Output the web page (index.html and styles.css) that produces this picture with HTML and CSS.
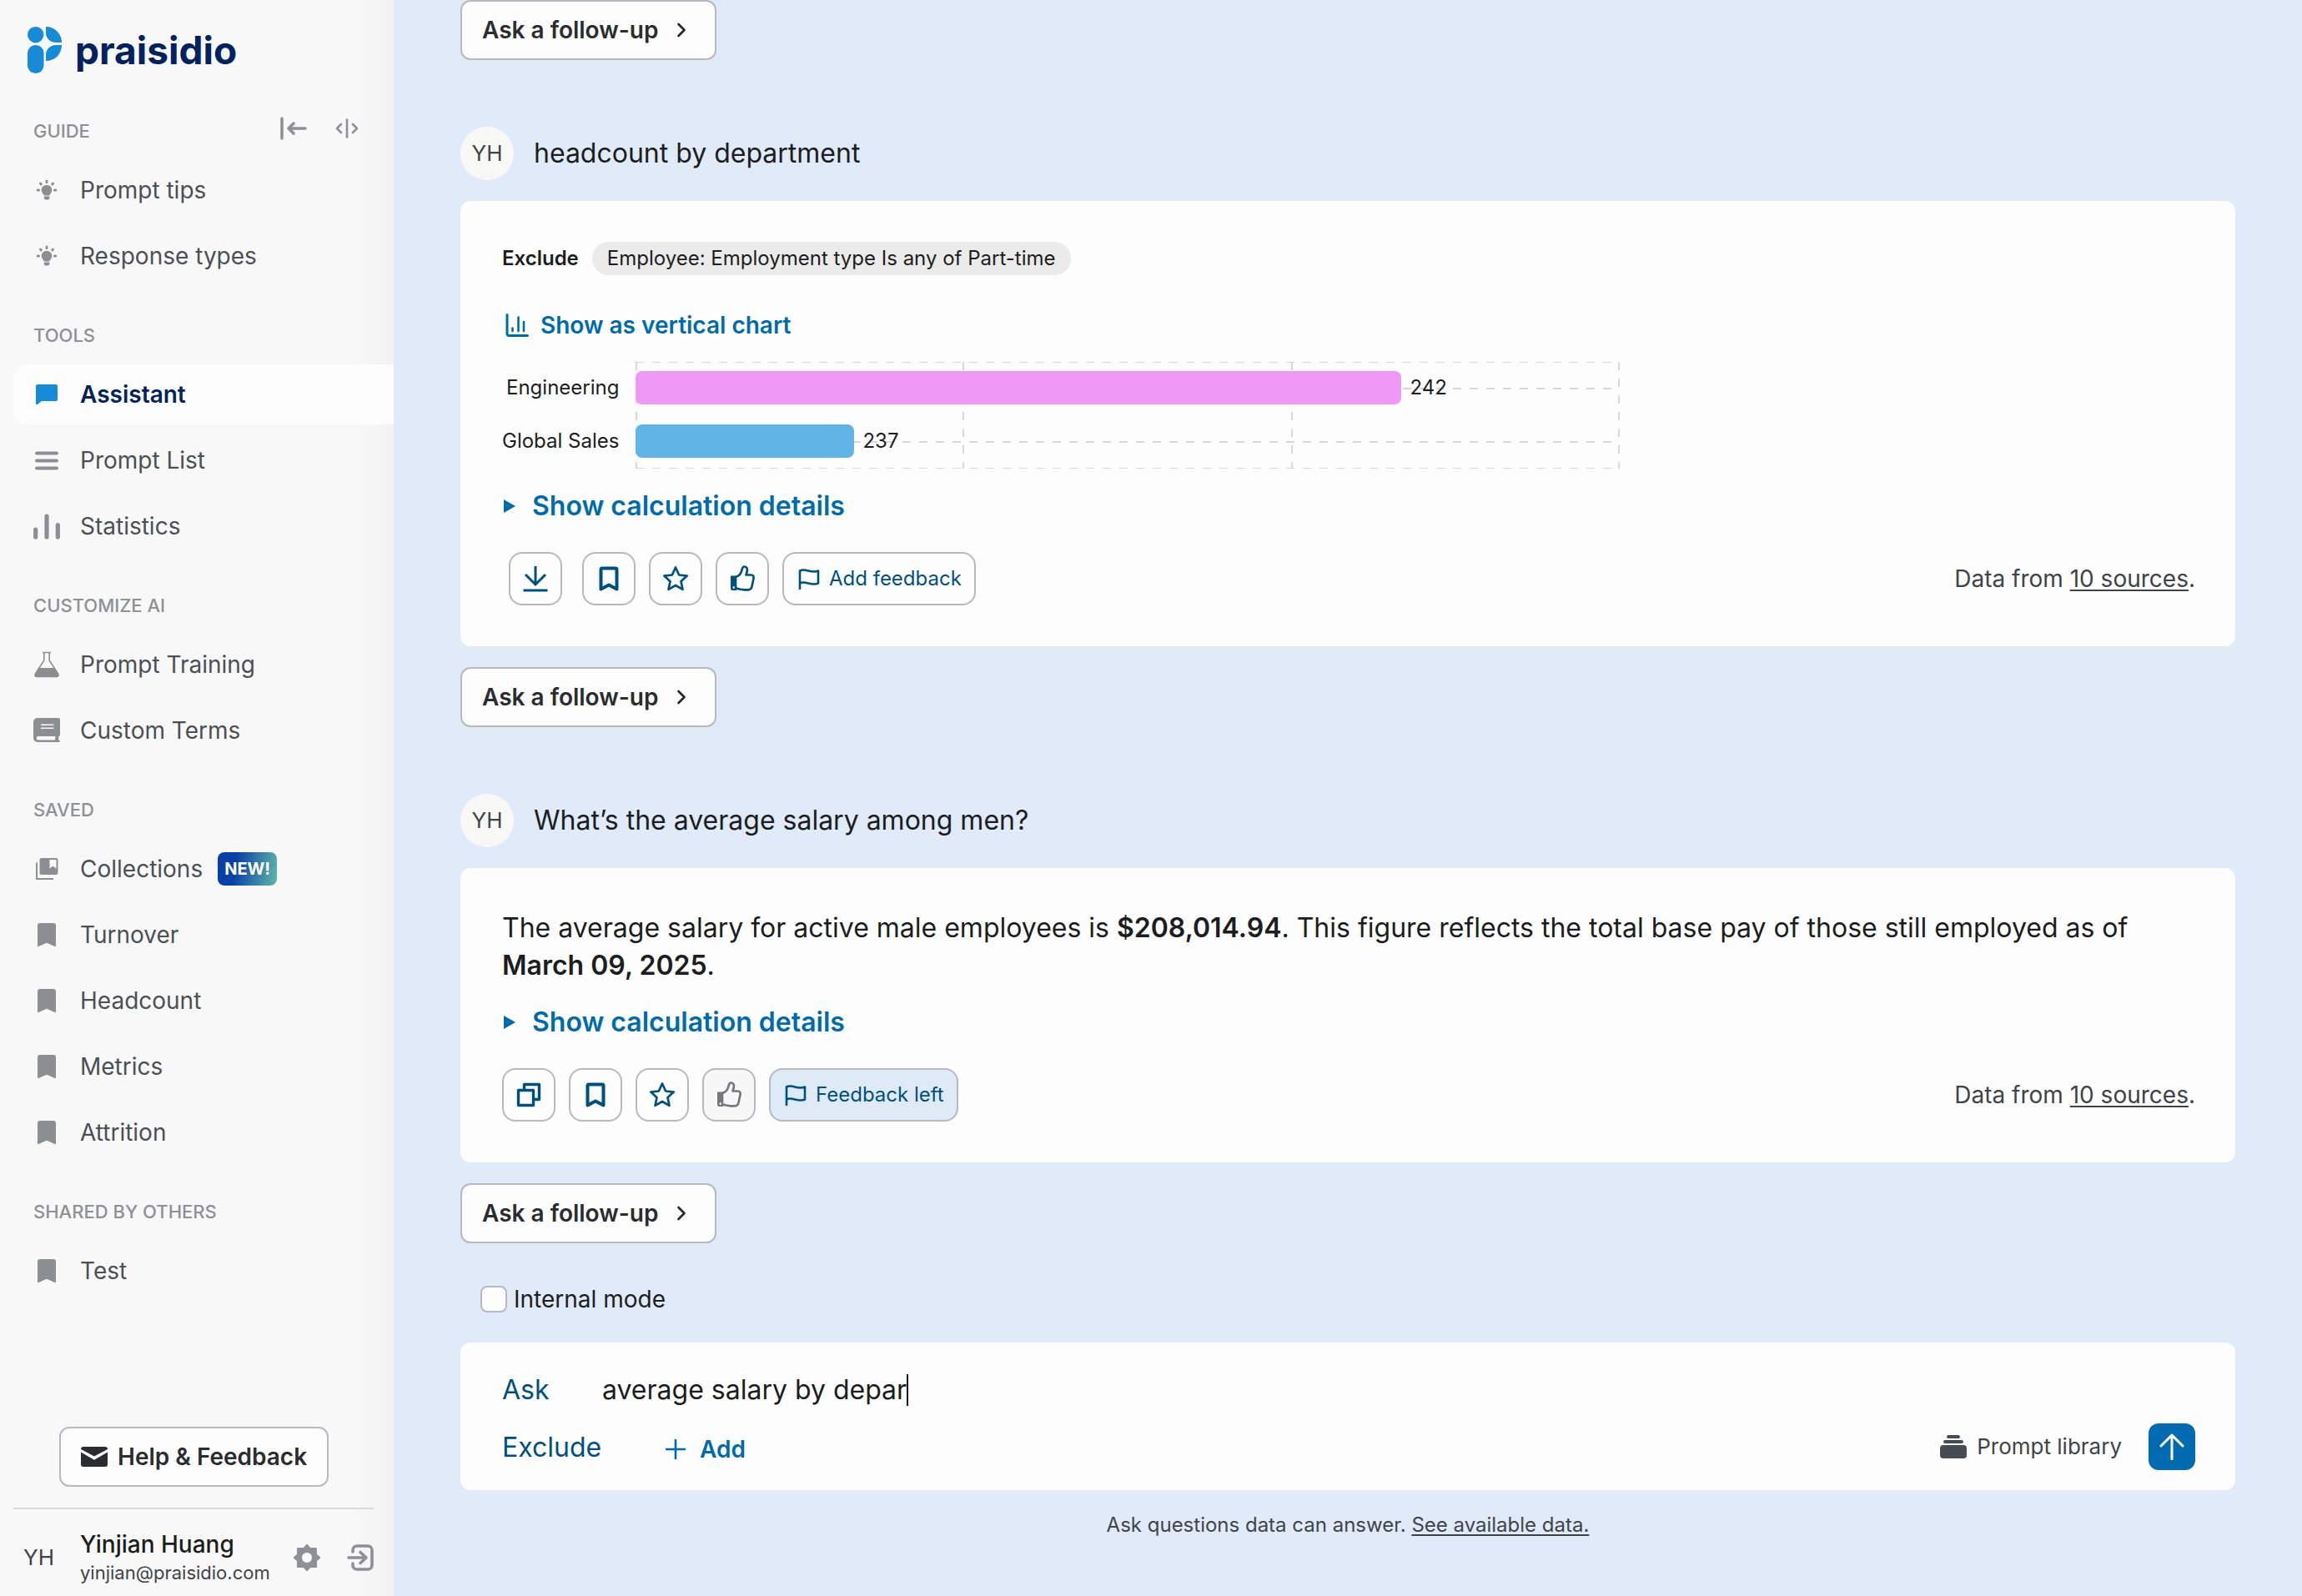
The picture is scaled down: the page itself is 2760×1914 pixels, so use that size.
FILE: index.html
```html
<!DOCTYPE html>
<html lang="en">
<head>
<meta charset="utf-8">
<meta name="viewport" content="width=device-width, initial-scale=1">
<title>Praisidio Assistant</title>
<link rel="stylesheet" href="styles.css">
</head>
<body>
<svg class="sprite" aria-hidden="true">
  <symbol id="i-bulb" viewBox="0 0 32 32"><circle cx="16" cy="16" r="6.3"/><path d="M12.5 19h7v3.5h-7zM12.8 23.6h6.6v1.8a2 2 0 0 1-2 2h-2.600a2 2 0 0 1-2-2z"/><g fill="none" stroke="currentColor" stroke-width="3" stroke-linecap="round"><path d="M16 5v1.500M8.500 8l.8.900M23.500 8l-.8.900M5.200 16h1.300M25.500 16h1.300"/></g></symbol>
  <symbol id="i-chat" viewBox="0 0 32 32"><path d="M5 4h22a2 2 0 0 1 2 2v16a2 2 0 0 1-2 2H10l-5 4H3V6a2 2 0 0 1 2-2z"/></symbol>
  <symbol id="i-list" viewBox="0 0 32 32"><path d="M4 7.500h24M4 16.500h24M4 25.500h24" fill="none" stroke="currentColor" stroke-width="4" stroke-linecap="round"/></symbol>
  <symbol id="i-bars" viewBox="0 0 32 32"><path d="M2.700 20v9M16 4v25M29.300 14.500v14.500" fill="none" stroke="currentColor" stroke-width="5.200" stroke-linecap="round"/></symbol>
  <symbol id="i-flask" viewBox="0 0 32 32"><path d="M11 1.500h10M12.800 2v9L2.500 27c-1 2 0 3.500 2 3.500h23c2 0 3-1.500 2-3.500L19.200 11V2" fill="none" stroke="currentColor" stroke-width="1.600"/><path d="M6.500 20h19l5 8c.5 2-1 3-3 3h-23c-2 0-3.500-1-3-3z"/></symbol>
  <symbol id="i-book" viewBox="0 0 32 32"><path fill-rule="evenodd" d="M5 1h25a2 2 0 0 1 2 2v18a2 2 0 0 1-1.500 2l-.5 4.500h1.500V30H5a5 5 0 0 1-5-5V6a5 5 0 0 1 5-5zM9 8.500v1.600h15.500V8.500zM9 12.500v1.600h15.500v-1.600zM6 23a2.200 2.200 0 0 0 0 4.500h20l.5-4.500z"/></symbol>
  <symbol id="i-collections" viewBox="0 0 32 32"><path d="M4 8.500v19.500h20" fill="none" stroke="currentColor" stroke-width="2"/><path fill-rule="evenodd" d="M10 3h17a2.500 2.500 0 0 1 2.500 2.500v15a2.500 2.500 0 0 1-2.500 2.500H10a2.500 2.500 0 0 1-2.500-2.500v-15A2.500 2.500 0 0 1 10 3zM19.500 5v10.500l4-2.800 4 2.800V5z"/></symbol>
  <symbol id="i-mark" viewBox="0 0 32 32"><path d="M8 2h16a3 3 0 0 1 3 3v24.500a.8.8 0 0 1-1.200.6L16 25.800 6.200 30.100a.8.8 0 0 1-1.200-.6V5a3 3 0 0 1 3-3z"/></symbol>
  <symbol id="i-mail" viewBox="0 0 32 24"><path d="M3 0h26a3 3 0 0 1 3 3L16 11.500 0 3a3 3 0 0 1 3-3z"/><path d="M0 6.500l16 9.200 16-9.200V21a3 3 0 0 1-3 3H3a3 3 0 0 1-3-3z"/></symbol>
  <symbol id="i-collapse" viewBox="0 0 32 28"><g fill="none" stroke="currentColor" stroke-linecap="round" stroke-linejoin="round"><path d="M2 2v24" stroke-width="3.500"/><path d="M30 14H10M16 8l-6 6 6 6" stroke-width="3.500"/></g></symbol>
  <symbol id="i-resize" viewBox="0 0 28 24"><g fill="none" stroke="currentColor" stroke-width="2.600" stroke-linecap="round" stroke-linejoin="round"><path d="M14 1.500v21M7 7l-5 5 5 5M21 7l5 5-5 5"/></g></symbol>
  <symbol id="i-gear" viewBox="0 0 32 32"><path fill-rule="evenodd" d="M16 0l4 4.500L27.300 4.700 27.500 12 32 16l-4.500 4 .2 7.500-7.700.1L16 32l-4-4.400-7.600-.2.100-7.400L0 16l4.500-4-.1-7.300 7.600-.2zM16 9.500a6.500 6.500 0 1 0 0 13 6.500 6.500 0 0 0 0-13z" stroke="currentColor" stroke-linejoin="round"/></symbol>
  <symbol id="i-logout" viewBox="0 0 32 32"><g fill="none" stroke="currentColor" stroke-width="3.600" stroke-linecap="round" stroke-linejoin="round"><path d="M7 9V7a5 5 0 0 1 5-5h13a5 5 0 0 1 5 5v18a5 5 0 0 1-5 5H12a5 5 0 0 1-5-5v-2"/><path d="M2 16h20M16 9.500l7 6.500-7 6.500"/></g></symbol>
  <symbol id="i-chevron" viewBox="0 0 12 20"><path d="M2.500 3l7 7-7 7" fill="none" stroke="currentColor" stroke-width="2.800" stroke-linecap="round" stroke-linejoin="round"/></symbol>
  <symbol id="i-chart" viewBox="0 0 28 28"><g fill="none" stroke="currentColor" stroke-width="3" stroke-linecap="round"><path d="M2 1.500V24a2.500 2.500 0 0 0 2.500 2.500H26.500"/><path d="M8.500 17.500v3.500M15.500 4.500v16.500M22 10v11" stroke-width="2.600"/></g></symbol>
  <symbol id="i-download" viewBox="0 0 32 32"><path d="M16 1v22M4 11l12 12 12-12M1.500 30h29" fill="none" stroke="currentColor" stroke-width="3"/></symbol>
  <symbol id="i-bookmark" viewBox="0 0 32 32"><path d="M8 3.500h16a1.500 1.500 0 0 1 1.500 1.500v23.500L16 23.500l-9.500 5V5A1.500 1.500 0 0 1 8 3.500z" fill="none" stroke="currentColor" stroke-width="4" stroke-linejoin="round"/></symbol>
  <symbol id="i-star" viewBox="0 0 32 32"><path d="M16 2.500l4.100 9 9.600 1.100-7.200 6.600 2 9.700L16 24l-8.500 4.900 2-9.700-7.200-6.600 9.600-1.100z" fill="none" stroke="currentColor" stroke-width="2.700" stroke-linejoin="round"/></symbol>
  <symbol id="i-thumb" viewBox="0 0 32 32"><path fill-rule="evenodd" d="M2 12.500h7V30H4.500A2.500 2.500 0 0 1 2 27.500zM6 25a1.500 1.500 0 1 0 0 3 1.500 1.500 0 0 0 0-3z"/><path d="M8 14c4-1 6.500-4 7.500-8.500.5-2.500 1.500-4 3-4 3 0 4 3 3.200 6L20.500 11.500h6c2.500 0 3.500 2 3 4.300l-2 9.500c-.6 3-2 4-4.500 4H18c-4 0-6-1.300-10-1.600z" fill="none" stroke="currentColor" stroke-width="2.700" stroke-linejoin="round"/></symbol>
  <symbol id="i-flag" viewBox="0 0 26 26"><path d="M2 25V3.500c7-4 13 4 22 0v15c-9 4-15-4-22 0" fill="none" stroke="currentColor" stroke-width="2.600" stroke-linejoin="round" stroke-linecap="round"/></symbol>
  <symbol id="i-copy" viewBox="0 0 32 32"><path d="M10.500 10V3.500h18v18H22M3.500 10.500h18v18h-18z" fill="none" stroke="currentColor" stroke-width="3.400" stroke-linejoin="round"/></symbol>
  <symbol id="i-plus" viewBox="0 0 26 26"><path d="M13 1v24M1 13h24" fill="none" stroke="currentColor" stroke-width="2.600"/></symbol>
  <symbol id="i-stack" viewBox="0 0 32 28"><rect y="12" width="32" height="16" rx="4"/><rect x="4" y="6" width="24" height="4" rx="2"/><rect x="8" width="16" height="4" rx="2"/></symbol>
  <symbol id="i-up" viewBox="0 0 32 32"><path d="M16 31V2M3 15L16 2l13 13" fill="none" stroke="currentColor" stroke-width="3" stroke-linecap="round" stroke-linejoin="round"/></symbol>
</svg>

<div class="app">
  <aside class="sidebar">
    <a class="logo" href="#">
      <svg class="logo-mark" viewBox="0 0 41 56" aria-hidden="true"><circle cx="9.700" cy="9.700" r="9.700"/><rect y="22" width="19.500" height="34" rx="9.700"/><path d="M22 0C32 0 41 8 41 19H34C27 19 22 14 22 7z"/><path d="M41 22C41 33 33 41 22 41V34C22 27 27 22 34 22z"/></svg>
      <span class="logo-name">praisidio</span>
    </a>
    <nav class="nav">
      <div class="nav-head first">
        <h2 class="nav-title">Guide</h2>
        <button class="plain" aria-label="Collapse sidebar"><svg class="ic-collapse"><use href="#i-collapse"/></svg></button>
        <button class="plain" aria-label="Resize sidebar"><svg class="ic-resize"><use href="#i-resize"/></svg></button>
      </div>
      <a class="nav-item" href="#"><svg class="ic"><use href="#i-bulb"/></svg>Prompt tips</a>
      <a class="nav-item" href="#"><svg class="ic"><use href="#i-bulb"/></svg>Response types</a>
      <div class="nav-head"><h2 class="nav-title">Tools</h2></div>
      <a class="nav-item active" href="#"><svg class="ic"><use href="#i-chat"/></svg>Assistant</a>
      <a class="nav-item" href="#"><svg class="ic"><use href="#i-list"/></svg>Prompt List</a>
      <a class="nav-item" href="#"><svg class="ic"><use href="#i-bars"/></svg>Statistics</a>
      <div class="nav-head"><h2 class="nav-title">Customize AI</h2></div>
      <a class="nav-item" href="#"><svg class="ic"><use href="#i-flask"/></svg>Prompt Training</a>
      <a class="nav-item" href="#"><svg class="ic"><use href="#i-book"/></svg>Custom Terms</a>
      <div class="nav-head"><h2 class="nav-title">Saved</h2></div>
      <a class="nav-item" href="#"><svg class="ic"><use href="#i-collections"/></svg>Collections <span class="badge">NEW!</span></a>
      <a class="nav-item" href="#"><svg class="ic"><use href="#i-mark"/></svg>Turnover</a>
      <a class="nav-item" href="#"><svg class="ic"><use href="#i-mark"/></svg>Headcount</a>
      <a class="nav-item" href="#"><svg class="ic"><use href="#i-mark"/></svg>Metrics</a>
      <a class="nav-item" href="#"><svg class="ic"><use href="#i-mark"/></svg>Attrition</a>
      <div class="nav-head"><h2 class="nav-title">Shared by others</h2></div>
      <a class="nav-item" href="#"><svg class="ic"><use href="#i-mark"/></svg>Test</a>
    </nav>
    <button class="btn help"><svg class="ic-mail"><use href="#i-mail"/></svg>Help &amp; Feedback</button>
    <div class="user">
      <span class="user-initials">YH</span>
      <div class="user-text">
        <span class="user-name">Yinjian Huang</span>
        <span class="user-mail">yinjian@praisidio.com</span>
      </div>
      <button class="plain" aria-label="Settings"><svg class="ic"><use href="#i-gear"/></svg></button>
      <button class="plain" aria-label="Log out"><svg class="ic"><use href="#i-logout"/></svg></button>
    </div>
  </aside>

  <main class="main">
    <button class="btn follow">Ask a follow-up<svg class="ic-chevron"><use href="#i-chevron"/></svg></button>

    <section class="exchange">
      <div class="question"><span class="avatar">YH</span><h3 class="question-text">headcount by department</h3></div>
      <article class="card">
        <div class="filters"><strong class="filters-label">Exclude</strong><span class="chip">Employee: Employment type Is any of Part-time</span></div>
        <button class="link-btn chart-toggle"><svg class="ic-chart"><use href="#i-chart"/></svg>Show as vertical chart</button>
        <div class="chart">
          <div class="chart-labels"><span>Engineering</span><span>Global Sales</span></div>
          <div class="plot">
            <svg class="grid-lines" viewBox="0 0 1180 130" preserveAspectRatio="none" aria-hidden="true">
              <g fill="none" stroke="#d8d8da" stroke-width="2" stroke-dasharray="10 10">
                <path stroke-width="1" d="M0 1.500h1180M0 128.500h1180"/>
                <path d="M0 33h1180M0 97h1180"/>
                <path d="M1 1v128M393 1v128M787 1v128M1179 1v128"/>
              </g>
            </svg>
            <div class="bar-row"><span class="bar pink" style="width: 918px"></span>242</div>
            <div class="bar-row"><span class="bar blue" style="width: 262px"></span>237</div>
          </div>
        </div>
        <details class="calc"><summary>Show calculation details</summary></details>
        <div class="actions">
          <button class="icon-btn spaced" aria-label="Download"><svg class="ic"><use href="#i-download"/></svg></button>
          <button class="icon-btn" aria-label="Save"><svg class="ic"><use href="#i-bookmark"/></svg></button>
          <button class="icon-btn" aria-label="Favorite"><svg class="ic"><use href="#i-star"/></svg></button>
          <button class="icon-btn" aria-label="Like"><svg class="ic"><use href="#i-thumb"/></svg></button>
          <button class="icon-btn wide"><svg class="ic-flag"><use href="#i-flag"/></svg>Add feedback</button>
          <span class="sources">Data from <a href="#">10 sources</a>.</span>
        </div>
      </article>
      <button class="btn follow">Ask a follow-up<svg class="ic-chevron"><use href="#i-chevron"/></svg></button>
    </section>

    <section class="exchange">
      <div class="question"><span class="avatar">YH</span><h3 class="question-text">What’s the average salary among men?</h3></div>
      <article class="card">
        <p class="answer">The average salary for active male employees is <strong>$208,014.94</strong>. This figure reflects the total base pay of those still employed as of <strong>March 09, 2025</strong>.</p>
        <details class="calc"><summary>Show calculation details</summary></details>
        <div class="actions">
          <button class="icon-btn" aria-label="Copy"><svg class="ic"><use href="#i-copy"/></svg></button>
          <button class="icon-btn" aria-label="Save"><svg class="ic"><use href="#i-bookmark"/></svg></button>
          <button class="icon-btn" aria-label="Favorite"><svg class="ic"><use href="#i-star"/></svg></button>
          <button class="icon-btn muted" aria-label="Liked"><svg class="ic"><use href="#i-thumb"/></svg></button>
          <button class="icon-btn wide left"><svg class="ic-flag"><use href="#i-flag"/></svg>Feedback left</button>
          <span class="sources">Data from <a href="#">10 sources</a>.</span>
        </div>
      </article>
      <button class="btn follow">Ask a follow-up<svg class="ic-chevron"><use href="#i-chevron"/></svg></button>
    </section>

    <label class="mode"><input type="checkbox">Internal mode</label>

    <form class="composer">
      <div class="composer-row">
        <label class="composer-label" for="ask">Ask</label>
        <div class="ask-field"><input id="ask" type="text" value="average salary by depar" autocomplete="off"><span class="caret"></span></div>
      </div>
      <div class="composer-row">
        <span class="composer-label wide">Exclude</span>
        <button type="button" class="link-btn add"><svg class="ic-plus"><use href="#i-plus"/></svg>Add</button>
        <button type="button" class="plain library"><svg class="ic-stack"><use href="#i-stack"/></svg>Prompt library</button>
        <button type="button" class="send" aria-label="Send"><svg class="ic"><use href="#i-up"/></svg></button>
      </div>
    </form>
    <p class="hint">Ask questions data can answer. <a href="#">See available data.</a></p>
  </main>
</div>
</body>
</html>
```
FILE: styles.css
```css
* { box-sizing: border-box; }

body {
  margin: 0;
  font-family: Inter, "Liberation Sans", sans-serif;
  font-size: 28px;
  line-height: 36px;
  color: #1c1d20;
  background: #e0eaf9;
}

button, input { font: inherit; color: inherit; }
button { cursor: pointer; }
h2, h3, p { margin: 0; font-weight: 400; }
a { color: inherit; }
svg { display: block; flex: none; fill: currentColor; }

.sprite { position: absolute; width: 0; height: 0; }
.ic { width: 32px; height: 32px; }

.app { display: flex; min-height: 100vh; }

/* Sidebar */
.sidebar {
  flex: none;
  display: flex;
  flex-direction: column;
  width: 472px;
  background: linear-gradient(90deg, #f8f8f8 90%, #f2f2f3);
}

.logo {
  display: flex;
  align-items: center;
  gap: 16px;
  height: 56px;
  margin: 32px 33px 0;
  text-decoration: none;
}
.logo-mark { width: 41px; height: 56px; fill: #178bd8; }
.logo-name { font-size: 46px; line-height: 56px; font-weight: 700; color: #00225e; }

.nav { padding-left: 16px; }
.nav-head {
  display: flex;
  align-items: center;
  height: 28px;
  margin: 45px 42px 21px 24px;
}
.nav-head.first { gap: 34px; margin-top: 55px; }
.nav-title {
  flex: 1;
  font-size: 22px;
  line-height: 28px;
  font-weight: 500;
  text-transform: uppercase;
  color: #8d9096;
}
.plain {
  display: flex;
  align-items: center;
  padding: 0;
  border: 0;
  background: none;
  color: #8d9096;
}
.nav-head .plain { padding-bottom: 6px; }
.ic-collapse { width: 32px; height: 28px; }
.ic-resize { width: 28px; height: 24px; }

.nav-item {
  display: flex;
  align-items: center;
  gap: 24px;
  height: 72px;
  padding-left: 24px;
  border-radius: 16px 0 0 16px;
  color: #4a5056;
  text-decoration: none;
}
.nav-item + .nav-item { margin-top: 7px; }
.nav-item svg { color: #8b8f94; }
.nav-item.active { background: #fdfdfd; color: #00225e; font-weight: 600; }
.nav-item.active svg { color: #178bd8; }
.badge {
  height: 40px;
  margin-left: -6px;
  padding: 0 8px;
  border-radius: 8px;
  font-size: 20px;
  line-height: 40px;
  font-weight: 700;
  color: #fff;
  background: linear-gradient(100deg, #0a3fa8 30%, #5fb8a8);
}

.btn {
  display: flex;
  align-items: center;
  height: 72px;
  padding: 0 24px;
  border: 2px solid #b6b8c2;
  border-radius: 12px;
  background: #fdfdfd;
  color: #2a2c30;
  font-weight: 600;
}
.help { gap: 12px; margin: auto auto 25px 71px; }
.ic-mail { width: 32px; height: 24px; }

.user {
  display: flex;
  align-items: center;
  gap: 32px;
  height: 106px;
  margin: 0 24px 0 16px;
  padding-top: 12px;
  border-top: 2px solid #dadade;
}
.user-initials { flex: none; width: 48px; padding-left: 12px; font-size: 26px; color: #404448; }
.user-text { display: flex; flex: 1; flex-direction: column; min-width: 0; }
.user-name { font-weight: 500; color: #1c1d20; }
.user-mail { font-size: 22px; line-height: 32px; color: #404448; }

/* Conversation */
.main {
  flex: 1;
  display: flex;
  flex-direction: column;
  min-width: 0;
  padding: 0 80px 32px;
}
.follow { align-self: flex-start; gap: 22px; padding: 0 34px 0 24px; }
.ic-chevron { width: 12px; height: 20px; }

.exchange { display: flex; flex-direction: column; gap: 25px; margin-top: 80px; }
.question { display: flex; align-items: center; gap: 24px; }
.avatar {
  width: 64px;
  height: 64px;
  border-radius: 50%;
  background: #f8f8f6;
  font-size: 26px;
  line-height: 64px;
  text-align: center;
  color: #404448;
}
.question-text { font-size: 32px; line-height: 40px; }

.card { padding: 49px 48px 49px 50px; border-radius: 12px; background: #fdfdfd; }

.filters { display: flex; align-items: center; gap: 16px; font-size: 24px; line-height: 40px; }
.filters-label { font-weight: 600; }
.chip { padding: 0 18px; border-radius: 20px; background: #ebebec; }

.link-btn {
  display: flex;
  align-items: center;
  padding: 0;
  border: 0;
  background: none;
  color: #006bab;
  font-weight: 600;
}
.chart-toggle { gap: 14px; margin: 42px 0 25px 4px; }
.ic-chart { width: 28px; height: 28px; }

.chart { display: flex; gap: 20px; font-size: 24px; line-height: 64px; }
.chart-labels { display: flex; flex-direction: column; text-align: right; }
.plot { position: relative; width: 1180px; }
.grid-lines { position: absolute; inset: 0; width: 100%; height: 130px; }
.bar-row { position: relative; display: flex; align-items: center; gap: 10px; height: 64px; }
.bar { height: 40px; border-radius: 8px; }
.pink { background: #ef98f5; }
.blue { background: #60b5e6; }

.calc { margin-top: 26px; font-size: 32px; line-height: 40px; font-weight: 600; color: #006bab; }
.calc summary { display: flex; align-items: center; gap: 20px; list-style: none; cursor: pointer; }
.calc summary::before {
  content: "";
  margin-left: 2px;
  border: solid transparent;
  border-width: 8px 0 8px 14px;
  border-left-color: #006bab;
}

.actions { display: flex; align-items: center; gap: 16px; margin-top: 35px; }
.icon-btn {
  display: flex;
  align-items: center;
  justify-content: center;
  width: 64px;
  height: 64px;
  padding: 0;
  border: 2px solid #b6b8c2;
  border-radius: 16px;
  background: #fdfdfd;
  color: #00507f;
}
.icon-btn.spaced { margin: 0 8px; }
.icon-btn.wide { gap: 11px; width: auto; padding: 0 15px 0 17px; font-size: 24px; }
.icon-btn.muted { background: #f7f7f7; color: #74787c; }
.icon-btn.left { background: #dfeaf7; }
.ic-flag { width: 26px; height: 26px; }
.sources { margin-left: auto; color: #404448; }
.sources a, .hint a { text-underline-offset: 3px; text-decoration-thickness: 2px; }

.answer { font-size: 32px; line-height: 45px; }
.answer strong { font-weight: 600; }

/* Composer */
.mode { display: flex; align-items: center; align-self: flex-start; gap: 8px; margin: 49px 0 34px 24px; }
.mode input {
  appearance: none;
  width: 32px;
  height: 32px;
  margin: 0;
  border: 2px solid #b6b8c2;
  border-radius: 8px;
  background: #fdfdfd;
}
.composer {
  display: flex;
  flex-direction: column;
  gap: 20px;
  padding: 37px 48px 24px 50px;
  border-radius: 12px;
  background: #fdfdfd;
}
.composer-row { display: flex; align-items: center; }
.composer-label { width: 120px; font-size: 32px; line-height: 40px; color: #00507f; }
.composer-label.wide { width: 195px; padding-top: 2px; }
.ask-field { display: flex; align-items: center; font-size: 32px; line-height: 40px; }
.ask-field input {
  field-sizing: content;
  height: 40px;
  padding: 0;
  border: 0;
  outline: 0;
  background: none;
}
.caret { width: 2px; height: 38px; background: #111; }
.add { gap: 16px; padding-top: 6px; }
.ic-plus { width: 26px; height: 26px; }
.library { gap: 12px; margin: 0 32px 0 auto; font-size: 26px; color: #404448; }
.ic-stack { width: 32px; height: 28px; color: #464b54; }
.send {
  display: flex;
  align-items: center;
  justify-content: center;
  width: 56px;
  height: 56px;
  padding: 0;
  border: 0;
  border-radius: 12px;
  background: #006bb0;
  color: #fff;
}
.hint { margin-top: 24px; font-size: 24px; text-align: center; color: #404448; }
```
